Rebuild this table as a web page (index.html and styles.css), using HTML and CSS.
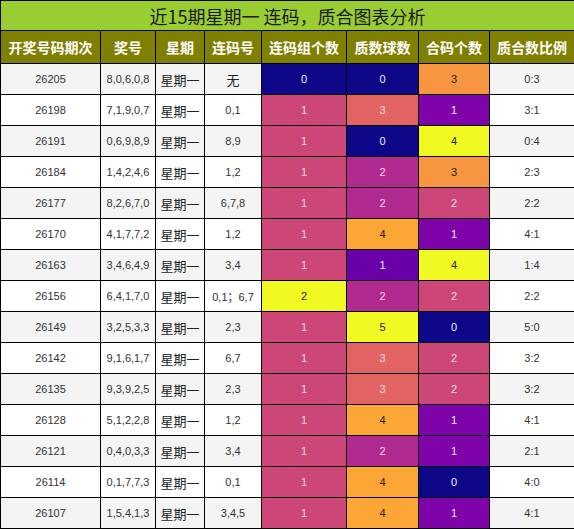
FILE: index.html
```html
<!DOCTYPE html>
<html lang="zh-CN">
<head>
    <meta charset="UTF-8" />
    <title>近15期星期一 连码，质合图表分析</title>
    <link rel="stylesheet" href="styles.css">
</head>
<body>
    <table class="chart">
        <colgroup>
            <col class="w-issue"><col class="w-num"><col class="w-day"><col class="w-pair">
            <col class="w-count"><col class="w-prime"><col class="w-comp"><col class="w-ratio">
        </colgroup>
        <tr class="title"><th colspan="8">近15期星期一 连码，质合图表分析</th></tr>
        <tr class="head">
            <th>开奖号码期次</th><th>奖号</th><th>星期</th><th>连码号</th>
            <th>连码组个数</th><th>质数球数</th><th>合码个数</th><th>质合数比例</th>
        </tr>
        <tr><td>26205</td><td>8,0,6,0,8</td><td class="cn">星期一</td><td class="cn">无</td><td class="navy">0</td><td class="navy">0</td><td class="orange">3</td><td>0:3</td></tr>
        <tr><td>26198</td><td>7,1,9,0,7</td><td class="cn">星期一</td><td>0,1</td><td class="pink">1</td><td class="salmon">3</td><td class="violet">1</td><td>3:1</td></tr>
        <tr><td>26191</td><td>0,6,9,8,9</td><td class="cn">星期一</td><td>8,9</td><td class="pink">1</td><td class="navy">0</td><td class="yellow">4</td><td>0:4</td></tr>
        <tr><td>26184</td><td>1,4,2,4,6</td><td class="cn">星期一</td><td>1,2</td><td class="pink">1</td><td class="magenta">2</td><td class="orange">3</td><td>2:3</td></tr>
        <tr><td>26177</td><td>8,2,6,7,0</td><td class="cn">星期一</td><td>6,7,8</td><td class="pink">1</td><td class="magenta">2</td><td class="pink">2</td><td>2:2</td></tr>
        <tr><td>26170</td><td>4,1,7,7,2</td><td class="cn">星期一</td><td>1,2</td><td class="pink">1</td><td class="amber">4</td><td class="violet">1</td><td>4:1</td></tr>
        <tr><td>26163</td><td>3,4,6,4,9</td><td class="cn">星期一</td><td>3,4</td><td class="pink">1</td><td class="indigo">1</td><td class="yellow">4</td><td>1:4</td></tr>
        <tr><td>26156</td><td>6,4,1,7,0</td><td class="cn">星期一</td><td>0,1；6,7</td><td class="yellow">2</td><td class="magenta">2</td><td class="pink">2</td><td>2:2</td></tr>
        <tr><td>26149</td><td>3,2,5,3,3</td><td class="cn">星期一</td><td>2,3</td><td class="pink">1</td><td class="yellow">5</td><td class="navy">0</td><td>5:0</td></tr>
        <tr><td>26142</td><td>9,1,6,1,7</td><td class="cn">星期一</td><td>6,7</td><td class="pink">1</td><td class="salmon">3</td><td class="pink">2</td><td>3:2</td></tr>
        <tr><td>26135</td><td>9,3,9,2,5</td><td class="cn">星期一</td><td>2,3</td><td class="pink">1</td><td class="salmon">3</td><td class="pink">2</td><td>3:2</td></tr>
        <tr><td>26128</td><td>5,1,2,2,8</td><td class="cn">星期一</td><td>1,2</td><td class="pink">1</td><td class="amber">4</td><td class="violet">1</td><td>4:1</td></tr>
        <tr><td>26121</td><td>0,4,0,3,3</td><td class="cn">星期一</td><td>3,4</td><td class="pink">1</td><td class="magenta">2</td><td class="violet">1</td><td>2:1</td></tr>
        <tr><td>26114</td><td>0,1,7,7,3</td><td class="cn">星期一</td><td>0,1</td><td class="pink">1</td><td class="amber">4</td><td class="navy">0</td><td>4:0</td></tr>
        <tr><td>26107</td><td>1,5,4,1,3</td><td class="cn">星期一</td><td>3,4,5</td><td class="pink">1</td><td class="amber">4</td><td class="violet">1</td><td>4:1</td></tr>
    </table>
</body>
</html>
```
FILE: styles.css
```css
:root{
    --title: #9acd32;
    --head: #808000;
    --line: #000;
    --light: #f4f4f4;
}

*{
    margin: 0;
    padding: 0;
    box-sizing: border-box;
}
body{
    background-color: #fff;
    font-family: "Liberation Sans", "Noto Sans CJK SC", sans-serif;
    color: #222;
}
.chart{
    width: 574px;
    table-layout: fixed;
    border-collapse: collapse;
}
.w-issue{ width: 100px; }
.w-num{ width: 55px; }
.w-day{ width: 49px; }
.w-pair{ width: 57px; }
.w-count{ width: 85px; }
.w-prime{ width: 72px; }
.w-comp{ width: 71px; }
.w-ratio{ width: 85px; }

.chart th,
.chart td{
    border: 1px solid var(--line);
    text-align: center;
    white-space: nowrap;
    overflow: hidden;
}
.title th{
    height: 30px;
    background-color: var(--title);
    font-family: "Noto Sans CJK SC", sans-serif;
    font-size: 18px;
    font-weight: normal;
    color: #1a1a1a;
    line-height: 1;
}
.head th{
    height: 33px;
    background-color: var(--head);
    color: #fff;
    font-family: "Noto Sans CJK SC", sans-serif;
    font-size: 14px;
    font-weight: bold;
}
.chart td{
    height: 31px;
    font-size: 11px;
    color: #333;
}
.chart tr:nth-child(odd) td{
    background-color: var(--light);
}
.chart tr:nth-child(even) td{
    background-color: #fff;
}
.chart tr td.cn{
    font-family: "Noto Sans CJK SC", sans-serif;
    font-size: 13px;
    color: #222;
}

/* value colours */
.chart tr td.navy{ background-color: #0d0887; color: #eee; }
.chart tr td.indigo{ background-color: #6a00a8; color: #eee; }
.chart tr td.violet{ background-color: #7e03a8; color: #eee; }
.chart tr td.magenta{ background-color: #b12a90; color: #f0dbe8; }
.chart tr td.pink{ background-color: #cc4778; color: #f3dde6; }
.chart tr td.salmon{ background-color: #e16462; color: #f6e0e0; }
.chart tr td.orange{ background-color: #f89540; color: #222; }
.chart tr td.amber{ background-color: #fca636; color: #222; }
.chart tr td.yellow{ background-color: #f0f921; color: #222; }
```
